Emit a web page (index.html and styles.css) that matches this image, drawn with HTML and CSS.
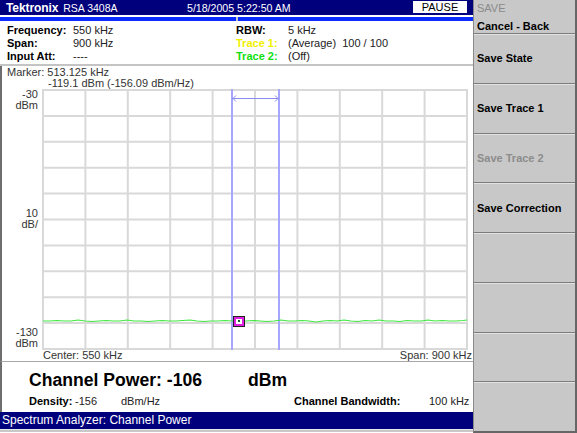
FILE: index.html
```html
<!DOCTYPE html>
<html>
<head>
<meta charset="utf-8">
<link rel="stylesheet" href="styles.css">
</head>
<body>
<div class="screen">
  <div class="main">
    <div class="titlebar">
      <div class="brand"><span class="logo">Tektronix</span><span class="model">RSA 3408A</span></div>
      <div class="date">5/18/2005 5:22:50 AM</div>
      <div class="pause">PAUSE</div>
    </div>
    <div class="gap"></div>
    <div class="blueline"><span class="tick"></span></div>
    <div class="header">
      <div class="group left">
        <div class="row"><span class="lbl">Frequency:</span><span class="val">550 kHz</span></div>
        <div class="row"><span class="lbl">Span:</span><span class="val">900 kHz</span></div>
        <div class="row"><span class="lbl">Input Att:</span><span class="val">----</span></div>
      </div>
      <div class="group right">
        <div class="row"><span class="lbl">RBW:</span><span class="val">5 kHz</span></div>
        <div class="row"><span class="lbl t1">Trace 1:</span><span class="val">(Average)&nbsp; 100 / 100</span></div>
        <div class="row"><span class="lbl t2">Trace 2:</span><span class="val">(Off)</span></div>
      </div>
    </div>
    <div class="sep"></div>
    <div class="plot">
      <div class="marker">
        <div>Marker: 513.125 kHz</div>
        <div class="mline2">-119.1 dBm (-156.09 dBm/Hz)</div>
      </div>
      <div class="gridrow">
        <div class="axis">
          <div>-30<br>dBm</div>
          <div>10<br>dB/</div>
          <div>-130<br>dBm</div>
        </div>
        <svg class="grid" width="428" height="261" viewBox="0 0 428 261">
          <g stroke="#d9d9d9" stroke-width="2">
            <line x1="1" y1="0" x2="1" y2="261"/>
            <line x1="43.4" y1="0" x2="43.4" y2="261"/>
            <line x1="85.8" y1="0" x2="85.8" y2="261"/>
            <line x1="128.2" y1="0" x2="128.2" y2="261"/>
            <line x1="170.6" y1="0" x2="170.6" y2="261"/>
            <line x1="213" y1="0" x2="213" y2="261"/>
            <line x1="255.4" y1="0" x2="255.4" y2="261"/>
            <line x1="297.8" y1="0" x2="297.8" y2="261"/>
            <line x1="340.2" y1="0" x2="340.2" y2="261"/>
            <line x1="382.6" y1="0" x2="382.6" y2="261"/>
            <line x1="425" y1="0" x2="425" y2="261"/>
            <line x1="0" y1="1" x2="426" y2="1"/>
            <line x1="0" y1="26.9" x2="426" y2="26.9"/>
            <line x1="0" y1="52.8" x2="426" y2="52.8"/>
            <line x1="0" y1="78.7" x2="426" y2="78.7"/>
            <line x1="0" y1="104.6" x2="426" y2="104.6"/>
            <line x1="0" y1="130.5" x2="426" y2="130.5"/>
            <line x1="0" y1="156.4" x2="426" y2="156.4"/>
            <line x1="0" y1="182.3" x2="426" y2="182.3"/>
            <line x1="0" y1="208.2" x2="426" y2="208.2"/>
            <line x1="0" y1="234.1" x2="426" y2="234.1"/>
            <line x1="0" y1="260" x2="426" y2="260"/>
          </g>
          <g stroke="#a6a6ff" stroke-width="2">
            <line x1="190" y1="0" x2="190" y2="261"/>
            <line x1="237" y1="0" x2="237" y2="261"/>
          </g>
          <g stroke="#8c8cf0" stroke-width="1" fill="none">
            <line x1="190" y1="9.5" x2="237" y2="9.5"/>
            <polyline points="194,6.5 191,9.5 194,12.5"/>
            <polyline points="233,6.5 236,9.5 233,12.5"/>
          </g>
          <polyline fill="none" stroke="#3fe83f" stroke-width="1.2" points="1,232 8,232 15,231.5 22,232 29,232 36,231 43,232 50,232.5 57,232 64,231.5 71,232 78,232 85,231 92,232 99,232 106,232.5 113,232 120,231.5 127,232 134,232 141,231.5 148,231 155,232 162,232.5 169,232 176,232 183,231.5 190,232 197,232 204,232 211,231.5 218,232 225,232.5 232,232 239,231 246,232 253,232 260,231.5 267,232 274,233 281,232 288,231.5 295,232 302,231 309,232 316,232.5 323,231.5 330,232 337,231 344,232 351,232 358,232.5 365,231.5 372,232 379,232 386,231 393,232 400,231.5 407,232 414,232 421,231.5 425,231"/>
          <rect x="191.5" y="227.5" width="11" height="10" fill="#fff" stroke="#222" stroke-width="1"/>
          <rect x="193" y="229" width="8" height="7" fill="none" stroke="#e020e0" stroke-width="2"/>
          <rect x="196" y="231" width="2" height="2" fill="#1d5a2a"/>
        </svg>
      </div>
      <div class="plotfoot">
        <span class="center">Center: 550 kHz</span>
        <span class="span">Span: 900 kHz</span>
      </div>
    </div>
    <div class="readout">
      <div class="power"><span class="pw">Channel Power: -106</span><span>dBm</span></div>
      <div class="details">
        <span class="dl">Density:</span><span class="dv">-156</span><span class="du">dBm/Hz</span><span class="cbl">Channel Bandwidth:</span><span>100 kHz</span>
      </div>
    </div>
    <div class="status">Spectrum Analyzer: Channel Power</div>
    <div class="bottom"></div>
  </div>
  <div class="menu">
    <div class="menutop">
      <div class="menutitle">SAVE</div>
      <div class="menuback">Cancel - Back</div>
    </div>
    <div class="btn">Save State</div>
    <div class="btn">Save Trace 1</div>
    <div class="btn disabled">Save Trace 2</div>
    <div class="btn">Save Correction</div>
    <div class="btn"></div>
    <div class="btn"></div>
    <div class="btn"></div>
    <div class="btn"></div>
  </div>
</div>
</body>
</html>
```

FILE: styles.css
```css
html, body {
  margin: 0;
  padding: 0;
  background: #ffffff;
}
body {
  width: 577px;
  height: 433px;
  overflow: hidden;
  font-family: "Liberation Sans", Arial, sans-serif;
  font-size: 11px;
  color: #111;
}
.screen {
  display: flex;
  width: 577px;
  height: 433px;
}
.main {
  width: 473px;
  display: flex;
  flex-direction: column;
}
.titlebar {
  height: 15px;
  background: #00007c;
  color: #fff;
  display: flex;
  align-items: center;
}
.brand {
  width: 181px;
  padding-left: 6px;
  display: flex;
  align-items: center;
}
.logo {
  font-weight: bold;
  font-size: 12px;
  letter-spacing: -0.1px;
}
.model {
  margin-left: 5px;
  font-size: 10.5px;
}
.date {
  font-size: 10.6px;
}
.pause {
  margin-left: auto;
  margin-right: 4px;
  width: 54px;
  height: 12px;
  border: 2px solid #00007c;
  border-top-width: 1px;
  background: #fff;
  color: #000;
  text-align: center;
  line-height: 12px;
  font-size: 11px;
  align-self: flex-start;
}
.gap {
  height: 2px;
  background: #fff;
}
.blueline {
  height: 4px;
  background: #0a2cff;
  display: flex;
}
.tick {
  width: 2px;
  margin-left: 236px;
  background: #c8c8c8;
}
.header {
  height: 40px;
  padding-top: 3px;
  background: #fff;
  display: flex;
}
.group .row {
  height: 13px;
  line-height: 13px;
  display: flex;
}
.group.left {
  padding-left: 7px;
  width: 229px;
}
.group.left .lbl {
  width: 66px;
}
.group.right .lbl {
  width: 52px;
}
.lbl {
  font-weight: bold;
  color: #000;
}
.val {
  color: #222;
}
.lbl.t1 {
  color: #f0f000;
}
.lbl.t2 {
  color: #10e010;
}
.sep {
  height: 2px;
  background: #c4c4c4;
}
.plot {
  height: 294px;
  padding-top: 1px;
  border-left: 2px solid #6e6e6e;
  border-bottom: 1px solid #a8a8a8;
  background: #fff;
  display: flex;
  flex-direction: column;
  color: #333;
}
.marker {
  height: 22px;
  line-height: 11px;
  padding-left: 5px;
}
.mline2 {
  padding-left: 41px;
}
.gridrow {
  display: flex;
  height: 261px;
}
.axis {
  width: 36px;
  padding-right: 4px;
  padding-bottom: 1px;
  display: flex;
  flex-direction: column;
  justify-content: space-between;
  text-align: right;
  line-height: 11px;
}
.grid {
  display: block;
}
.plotfoot {
  height: 11px;
  line-height: 11px;
  display: flex;
  justify-content: space-between;
  padding-left: 41px;
  padding-right: 1px;
}
.readout {
  height: 50px;
  border-left: 2px solid #6e6e6e;
  padding-left: 27px;
  background: #fff;
}
.power {
  margin-top: 8px;
  height: 20px;
  line-height: 20px;
  font-weight: bold;
  font-size: 17.6px;
  color: #000;
  display: flex;
}
.pw {
  width: 219px;
}
.details {
  margin-top: 5px;
  line-height: 13px;
  display: flex;
  color: #222;
}
.dl {
  width: 46px;
  font-weight: bold;
  color: #000;
}
.dv {
  width: 46px;
}
.du {
  width: 173px;
}
.cbl {
  width: 135px;
  font-weight: bold;
  color: #000;
}
.status {
  height: 17px;
  line-height: 17px;
  background: #00007c;
  color: #fff;
  font-size: 12px;
  padding-left: 2px;
}
.bottom {
  height: 3px;
  background: #c8c8c8;
  border-top: 1px solid #e8e8e8;
  box-sizing: border-box;
}
.menu {
  flex: 1;
  display: flex;
  flex-direction: column;
  background: #c8c8c8;
  border-left: 1px solid #8a8a8a;
  border-right: 2px solid #666;
  border-bottom: 2px solid #666;
}
.menutop {
  height: 33px;
  padding-left: 3px;
}
.menutitle {
  margin-top: 2px;
  line-height: 13px;
  color: #8a8a8a;
}
.menuback {
  margin-top: 5px;
  line-height: 13px;
  font-weight: bold;
  color: #000;
}
.btn {
  flex: 1;
  border-top: 1px solid #7c7c7c;
  box-shadow: inset 0 1px 0 #e2e2e2;
  padding-left: 3px;
  display: flex;
  align-items: center;
  font-weight: bold;
  color: #000;
}
.btn.disabled {
  color: #8c8c8c;
}
```
